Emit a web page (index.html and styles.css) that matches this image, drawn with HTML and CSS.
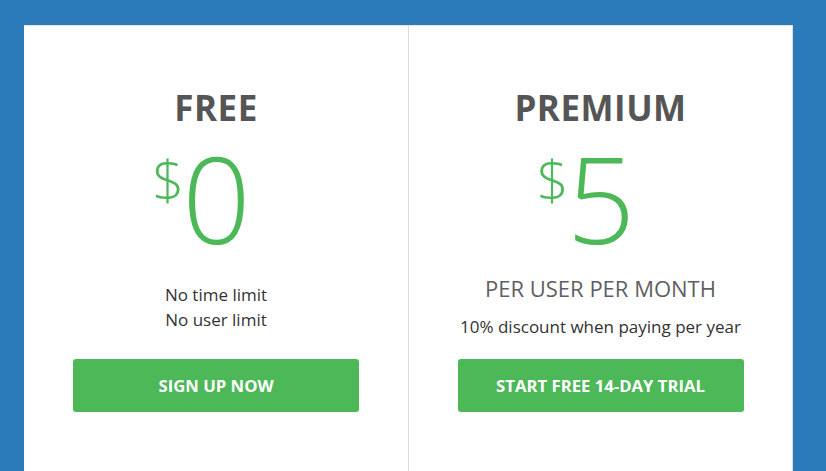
FILE: index.html
```html
<!DOCTYPE html>
<html lang="en">
<head>
  <meta charset="UTF-8" />
  <meta name="viewport" content="width=device-width, initial-scale=1.0"/>
  <title>Pricing</title>
  <link rel="stylesheet" href="styles.css">
</head>
<body>
  <div class="pricing">
    <div class="plan">
      <h2>FREE</h2>
      <div class="price"><span class="currency">$</span>0</div>
      <div class="details free">
        <p>No time limit</p>
        <p>No user limit</p>
      </div>
      <a class="btn" href="#">SIGN UP NOW</a>
    </div>

    <div class="plan">
      <h2>PREMIUM</h2>
      <div class="price"><span class="currency">$</span>5</div>
      <div class="details">
        <p class="period">PER USER PER MONTH</p>
        <p>10% discount when paying per year</p>
      </div>
      <a class="btn" href="#">START FREE 14-DAY TRIAL</a>
    </div>
  </div>
</body>
</html>
```

FILE: styles.css
```css
body {
  margin: 0;
  height: 471px;
  overflow: hidden;
  background-color: #2b7bba;
  font-family: 'Open Sans', sans-serif;
  padding: 25px 33px 0 24px;
  box-sizing: border-box;
}

.pricing {
  display: grid;
  grid-template-columns: 385px 383px;
  background: #fff;
  height: 446px;
  border-top: 1px solid #e4e4e4;
  border-right: 1px solid #dcdcdc;
}

.plan {
  text-align: center;
  padding-top: 61px;
  display: flex;
  flex-direction: column;
  align-items: center;
}

.plan:first-child {
  border-right: 1px solid #dddddd;
}

h2 {
  margin: 0;
  font-size: 35px;
  line-height: 42px;
  font-weight: 700;
  color: #555;
  letter-spacing: 0.5px;
}

.price {
  margin-top: 19px;
  font-size: 120px;
  line-height: 100px;
  font-weight: 300;
  color: #4cb857;
  padding-right: 29px;
}

.currency {
  font-size: 56px;
  vertical-align: top;
  line-height: 56px;
  position: relative;
  top: 2px;
  margin-right: -2px;
}

.details {
  height: 111px;
  padding-top: 25px;
  box-sizing: border-box;
}

.details.free {
  padding-top: 34px;
}

.details p {
  margin: 0;
  font-size: 17px;
  line-height: 25px;
  color: #333;
}

.details .period {
  font-size: 22px;
  line-height: 30px;
  color: #5f5f5f;
  margin-bottom: 11px;
}

.btn {
  display: block;
  width: 286px;
  height: 53px;
  line-height: 53px;
  background-color: #4cb857;
  color: #fff;
  font-weight: 700;
  font-size: 16.7px;
  text-decoration: none;
  border-radius: 3px;
}
```
